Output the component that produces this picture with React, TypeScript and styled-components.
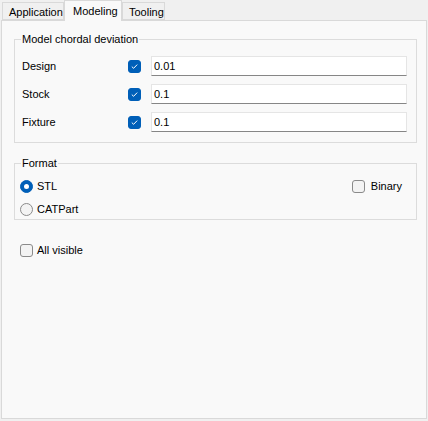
import React, { useState } from 'react';
import styled, { createGlobalStyle } from 'styled-components';

const GlobalStyle = createGlobalStyle`
  html, body {
    margin: 0;
    padding: 0;
    background: #f0f0f0;
  }
  body {
    font-family: "Segoe UI", "Liberation Sans", Arial, sans-serif;
    font-size: 11px;
    color: #000000;
  }
`;

const Window = styled.div`
  width: 428px;
  height: 421px;
  box-sizing: border-box;
  padding: 0 1px 2px 1px;
  display: flex;
  flex-direction: column;
`;

const TabStrip = styled.div`
  display: flex;
  align-items: flex-end;
  height: 20px;
  padding-left: 1px;
`;

const Tab = styled.div<{ $active?: boolean; $w: number }>`
  box-sizing: border-box;
  width: ${(p) => p.$w}px;
  height: ${(p) => (p.$active ? 21 : 18)}px;
  margin-bottom: ${(p) => (p.$active ? -1 : 0)}px;
  position: relative;
  z-index: ${(p) => (p.$active ? 1 : 0)};
  background: ${(p) => (p.$active ? '#f9f9f9' : '#f0f0f0')};
  border: 1px solid #d9d9d9;
  border-bottom: ${(p) => (p.$active ? 'none' : '1px solid #d9d9d9')};
  padding: ${(p) => (p.$active ? '3px 0 0 8px' : '2px 0 0 6px')};
  line-height: 14px;
  white-space: nowrap;
  overflow: hidden;
  cursor: default;
`;

const Panel = styled.div`
  flex: 1;
  box-sizing: border-box;
  background: #f9f9f9;
  border: 1px solid #d9d9d9;
  padding: 10px 9px 0 12px;
  display: flex;
  flex-direction: column;
`;

const Group = styled.fieldset<{ $pad: number; $bottom: number }>`
  margin: 0;
  border: 1px solid #dcdcdc;
  padding: 0 8px ${(p) => p.$bottom}px ${(p) => p.$pad}px;
  min-width: 0;

  & > legend {
    margin-left: ${(p) => 6 - p.$pad}px;
  }
`;

const Legend = styled.legend`
  padding: 0 1px;
  line-height: 16px;
`;

const Rows = styled.div`
  display: flex;
  flex-direction: column;
  gap: 8px;
  padding-top: 9px;
`;

const Row = styled.div`
  display: flex;
  align-items: center;
  height: 20px;
`;

const RowLabel = styled.span`
  width: 106px;
`;

const Box = styled.span<{ $checked?: boolean }>`
  box-sizing: border-box;
  width: 13px;
  height: 13px;
  border-radius: 3px;
  flex: none;
  display: inline-flex;
  align-items: center;
  justify-content: center;
  background: ${(p) => (p.$checked ? '#005fb8' : '#f3f3f3')};
  border: 1px solid ${(p) => (p.$checked ? '#005fb8' : '#8a8a8a')};
`;

const Field = styled.input`
  box-sizing: border-box;
  margin-left: 10px;
  width: 256px;
  height: 20px;
  border: 1px solid #e5e5e5;
  border-bottom: 1px solid #868686;
  background: #ffffff;
  padding: 0 2px;
  font: inherit;
  color: #000;
  outline: none;
`;

const FormatBody = styled.div`
  display: flex;
  justify-content: space-between;
  padding-top: 8px;
`;

const RadioCol = styled.div`
  display: flex;
  flex-direction: column;
  gap: 9px;
`;

const Option = styled.label<{ $gap?: number }>`
  display: flex;
  align-items: center;
  gap: ${(p) => p.$gap ?? 4}px;
  height: 14px;
  cursor: default;
`;

const Radio = styled.span<{ $on?: boolean }>`
  box-sizing: border-box;
  width: 13px;
  height: 13px;
  border-radius: 50%;
  flex: none;
  display: inline-flex;
  align-items: center;
  justify-content: center;
  background: ${(p) => (p.$on ? '#005fb8' : '#f3f3f3')};
  border: 1px solid ${(p) => (p.$on ? '#005fb8' : '#8a8a8a')};

  &::after {
    content: '';
    display: ${(p) => (p.$on ? 'block' : 'none')};
    width: 5px;
    height: 5px;
    border-radius: 50%;
    background: #ffffff;
  }
`;

const BinaryWrap = styled.div`
  margin-right: 6px;
`;

const Footer = styled.div`
  padding: 23px 0 0 6px;
`;

const Check = ({ checked }: { checked: boolean }) => (
  <Box $checked={checked}>
    {checked && (
      <svg width="9" height="9" viewBox="0 0 9 9">
        <path d="M1.8 4.6 L3.6 6.3 L7.2 2.6" fill="none" stroke="#ffffff" strokeWidth="1" />
      </svg>
    )}
  </Box>
);

const deviations = [
  { name: 'Design', value: '0.01' },
  { name: 'Stock', value: '0.1' },
  { name: 'Fixture', value: '0.1' },
];

export default function App() {
  const [format, setFormat] = useState('STL');

  return (
    <>
      <GlobalStyle />
      <Window>
        <TabStrip>
          <Tab $w={62}>Application</Tab>
          <Tab $w={58} $active>
            Modeling
          </Tab>
          <Tab $w={43}>Tooling</Tab>
        </TabStrip>
        <Panel>
          <Group $pad={7} $bottom={10}>
            <Legend>Model chordal deviation</Legend>
            <Rows>
              {deviations.map((d) => (
                <Row key={d.name}>
                  <RowLabel>{d.name}</RowLabel>
                  <Check checked />
                  <Field defaultValue={d.value} />
                </Row>
              ))}
            </Rows>
          </Group>
          <Group $pad={5} $bottom={3} style={{ marginTop: 12 }}>
            <Legend>Format</Legend>
            <FormatBody>
              <RadioCol>
                {['STL', 'CATPart'].map((f) => (
                  <Option key={f} onClick={() => setFormat(f)}>
                    <Radio $on={format === f} />
                    {f}
                  </Option>
                ))}
              </RadioCol>
              <BinaryWrap>
                <Option $gap={6}>
                  <Check checked={false} />
                  Binary
                </Option>
              </BinaryWrap>
            </FormatBody>
          </Group>
          <Footer>
            <Option>
              <Check checked={false} />
              All visible
            </Option>
          </Footer>
        </Panel>
      </Window>
    </>
  );
}
